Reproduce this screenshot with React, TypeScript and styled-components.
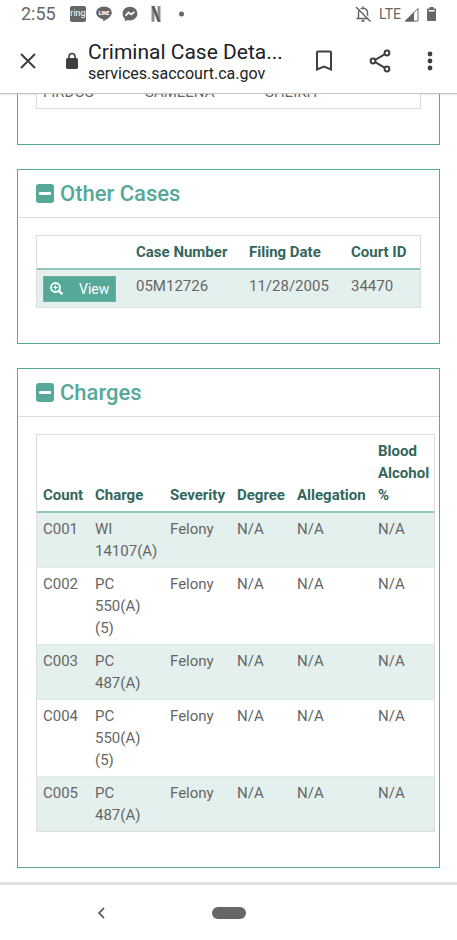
import React from "react";
import styled, { createGlobalStyle } from "styled-components";

const teal = "#56a899";
const line = "#dddddd";

const GlobalStyle = createGlobalStyle`
  * { box-sizing: border-box; }
  body {
    margin: 0;
    background: #ffffff;
    color: #666666;
    font-family: Roboto, "Liberation Sans", sans-serif;
    font-size: 15px;
    line-height: 22px;
  }
`;

const Page = styled.div`
  display: flex;
  flex-direction: column;
  min-height: 100vh;
`;

const StatusBar = styled.div`
  display: flex;
  align-items: center;
  justify-content: space-between;
  height: 28px;
  padding: 0 20px 0 21px;
`;

const StatusGroup = styled.div<{ $gap: number }>`
  display: flex;
  align-items: center;
  gap: ${(p) => p.$gap}px;
`;

const Clock = styled.span`
  width: 39px;
  font-size: 18px;
`;

const Network = styled.span`
  font-size: 14px;
`;

const Toolbar = styled.header`
  display: flex;
  align-items: center;
  height: 66px;
  padding: 0 13px 0 16px;
  border-bottom: 1px solid #c4c4c4;
  box-shadow: 0 1px 1px #eeeeee;
`;

const IconButton = styled.button<{ $width: number }>`
  display: flex;
  align-items: center;
  justify-content: center;
  flex: none;
  width: ${(p) => p.$width}px;
  height: 44px;
  padding: 0;
  border: 0;
  background: none;
  color: #3c4043;
`;

const LockIcon = styled.svg`
  flex: none;
  margin: 0 9px 0 25px;
`;

const Address = styled.div`
  flex: 1;
  min-width: 0;
  padding-top: 3px;
  color: #202124;
`;

const PageTitle = styled.h1`
  margin: 0;
  overflow: hidden;
  font-size: 21px;
  font-weight: 400;
  line-height: 24px;
  text-overflow: ellipsis;
  white-space: nowrap;
`;

const Host = styled.div`
  font-size: 16px;
  line-height: 20px;
`;

const Actions = styled.div`
  display: flex;
  flex: none;
  margin-left: 14px;
`;

const Viewport = styled.main`
  flex: 1;
  overflow: hidden;
  padding: 0 17px 14px;
`;

const Stack = styled.div`
  display: flex;
  flex-direction: column;
  gap: 24px;
  margin-top: -19px;
`;

const Panel = styled.section<{ $continued?: boolean }>`
  border: 1px solid ${teal};
  border-top-width: ${(p) => (p.$continued ? 0 : 1)}px;
`;

const PanelHeading = styled.h2`
  display: flex;
  height: 48px;
  margin: 0;
  border-bottom: 1px solid ${line};
`;

const Toggle = styled.button`
  display: flex;
  align-items: center;
  gap: 6px;
  padding: 0 18px;
  border: 0;
  background: none;
  color: ${teal};
  font: 500 22px/24px Roboto, "Liberation Sans", sans-serif;
`;

const PanelBody = styled.div<{ $continued?: boolean }>`
  padding: ${(p) => (p.$continued ? 0 : 17)}px 18px 35px;
`;

const DataTable = styled.table<{ $min?: number }>`
  width: max(100%, ${(p) => p.$min ?? 0}px);
  table-layout: fixed;
  border: 1px solid ${line};
  border-collapse: separate;
  border-spacing: 0;
`;

const Column = styled.col<{ $width?: number }>`
  width: ${(p) => (p.$width ? `${p.$width}px` : "auto")};
`;

const HeadCell = styled.th`
  padding: 5px 0 5px 6px;
  border-bottom: 2px solid #8fc7bb;
  color: #33675b;
  font-size: 15px;
  font-weight: 700;
  text-align: left;
  vertical-align: bottom;
`;

const Row = styled.tr`
  &:nth-child(odd) { background: #e4f0ed; }
  &:not(:first-child) > td { border-top: 1px solid #e6eae9; }
`;

const PlainRow = styled.tr`
  background: #ffffff;
`;

const Cell = styled.td`
  padding: 5px 6px;
  vertical-align: top;
`;

const ActionCell = styled.td`
  height: 37px;
  padding: 0 6px;
`;

const ViewButton = styled.button`
  display: flex;
  align-items: center;
  gap: 16px;
  height: 26px;
  padding: 0 6px;
  border: 1px solid #6ab3a5;
  background: ${teal};
  color: #ffffff;
  font: 400 14px/20px Roboto, "Liberation Sans", sans-serif;
`;

const SystemNav = styled.nav`
  display: grid;
  grid-template-columns: 1fr 34px 1fr;
  align-items: center;
  height: 58px;
  border-top: 3px solid #e1e1e1;
`;

const NavButton = styled.button`
  display: flex;
  align-items: center;
  justify-content: center;
  height: 32px;
  padding: 0 10px 0 0;
  border: 0;
  background: none;
  color: #666666;
`;

const HomePill = styled.button`
  height: 12px;
  padding: 0;
  border: 0;
  border-radius: 6px;
  background: #666666;
`;

const MinusSquare = () => (
  <svg width="18" height="20" viewBox="0 0 18 20" aria-hidden="true">
    <rect width="18" height="19" rx="3" fill={teal} />
    <rect x="3" y="8" width="12" height="3" rx="1" fill="#fff" />
  </svg>
);

const charges = [
  ["C001", "WI 14107(A)"],
  ["C002", "PC 550(A) (5)"],
  ["C003", "PC 487(A)"],
  ["C004", "PC 550(A) (5)"],
  ["C005", "PC 487(A)"],
];

const chargeColumns = [
  { label: "Count", width: 52 },
  { label: "Charge", width: 75 },
  { label: "Severity", width: 67 },
  { label: "Degree", width: 60 },
  { label: "Allegation", width: 81 },
  { label: "Blood Alcohol %" },
];

const caseColumns = [
  { label: "", width: 93 },
  { label: "Case Number", width: 113 },
  { label: "Filing Date", width: 102 },
  { label: "Court ID" },
];

type ColumnSpec = { label: string; width?: number };

const TableHead = ({ columns }: { columns: ColumnSpec[] }) => (
  <>
    <colgroup>
      {columns.map((c) => <Column key={c.label} $width={c.width} />)}
    </colgroup>
    <thead>
      <tr>
        {columns.map((c) => <HeadCell key={c.label} scope="col">{c.label}</HeadCell>)}
      </tr>
    </thead>
  </>
);

export default function App() {
  return (
    <Page>
      <GlobalStyle />
      <StatusBar>
        <StatusGroup $gap={10}>
          <Clock>2:55</Clock>
          <svg width="16" height="16" viewBox="0 0 16 16">
            <rect width="16" height="16" rx="2" fill="#666" />
            <text x="8" y="10" fill="#fff" fontSize="9" textAnchor="middle" fontFamily="Roboto">ring</text>
          </svg>
          <svg width="16" height="16" viewBox="0 0 16 16">
            <path d="M8 .5C3.6.5.2 3.3.2 6.8c0 3.1 2.8 5.7 6.5 6.2.6.1.5.5.4 1.3-.1.7.1 1 .8.7 2-.9 7.9-4.2 7.9-8.2C15.8 3.3 12.4.5 8 .5Z" fill="#666" />
            <text x="8" y="8.5" fill="#fff" fontSize="5" fontWeight="900" textAnchor="middle" fontFamily="Roboto">LINE</text>
          </svg>
          <svg width="16" height="16" viewBox="0 0 16 16">
            <path d="M8 .8C3.8.8.6 3.8.6 7.700c0 2 .8 3.700 2.200 4.900v2.600l2.500-1.200c.8.3 1.700.4 2.700.4 4.200 0 7.400-3 7.400-6.800S12.200.8 8 .8Z" fill="#666" />
            <path d="m3.500 9.800 3-3.400 2.600 2 3.400-2.500" fill="none" stroke="#fff" strokeWidth="1.7" />
          </svg>
          <svg width="16" height="16" viewBox="0 0 16 16">
            <path d="M3.500 0H6.500V15.500L3.500 16ZM9.500 0h3v16l-3-.5Z" fill="#8d8d8d" />
            <path d="M3.500 0h3l6 16-3-.4Z" fill="#5d5d5d" />
          </svg>
          <svg width="16" height="16" viewBox="0 0 16 16"><circle cx="7.500" cy="8" r="2.500" fill="#666" /></svg>
        </StatusGroup>
        <StatusGroup $gap={7}>
          <svg width="18" height="18" viewBox="0 0 18 18" fill="none" stroke="#666" strokeWidth="1.5">
            <path d="M4.500 13.500V7.800c0-2.500 1.500-4.400 4.500-4.600 3 .2 4.500 2.100 4.500 4.600v5.700M2.500 13.500h13M9 1.500v2" />
            <path d="M7.500 15.800h3" strokeWidth="2" />
            <path d="m3.200 1.200 14 14.500" stroke="#fff" />
            <path d="m2 2 14.500 14.500" />
          </svg>
          <StatusGroup $gap={3}>
            <Network>LTE</Network>
            <svg width="15" height="15" viewBox="0 0 15 15">
              <path d="M14 1.500V14H1.500Z" fill="none" stroke="#666" />
              <path d="M10 5v9.500H.5Z" fill="#666" />
            </svg>
          </StatusGroup>
          <svg width="11" height="16" viewBox="0 0 11 16">
            <path d="M3.500 1h4v1.500H9q1 0 1 1V14q0 1-1 1H2q-1 0-1-1V3.500q0-1 1-1h1.500Z" fill="#666" />
            <path d="M2.500 4h6v1.500h-6Z" fill="#fff" />
          </svg>
        </StatusGroup>
      </StatusBar>

      <Toolbar>
        <IconButton $width={24} aria-label="Close">
          <svg width="18" height="18" viewBox="0 0 18 18" fill="none" stroke="currentColor" strokeWidth="2">
            <path d="m2 2 14 14M16 2 2 16" />
          </svg>
        </IconButton>
        <LockIcon width="14" height="18" viewBox="0 0 14 18">
          <rect x="1" y="6" width="12" height="11" rx="1.500" fill="#3c4043" />
          <path d="M4 7V4.500a3 3 0 0 1 6 0V7" fill="none" stroke="#3c4043" strokeWidth="1.6" />
        </LockIcon>
        <Address>
          <PageTitle>Criminal Case Deta...</PageTitle>
          <Host>services.saccourt.ca.gov</Host>
        </Address>
        <Actions>
          <IconButton $width={40} aria-label="Bookmark">
            <svg width="18" height="22" viewBox="0 0 18 22" fill="none" stroke="currentColor" strokeWidth="2">
              <path d="M2 2.500Q2 1.500 3 1.500H15Q16 1.500 16 2.500V19.500L9 16.500L2 19.500Z" />
            </svg>
          </IconButton>
          <IconButton $width={72} aria-label="Share">
            <svg width="22" height="24" viewBox="0 0 22 24" fill="none" stroke="currentColor" strokeWidth="2">
              <circle cx="4" cy="12" r="2.400" />
              <circle cx="18" cy="4" r="2.400" />
              <circle cx="18" cy="20" r="2.400" />
              <path d="m6.200 10.800 9.700-5.600M6.200 13.200l9.700 5.600" />
            </svg>
          </IconButton>
          <IconButton $width={28} aria-label="More options">
            <svg width="6" height="20" viewBox="0 0 6 20" fill="currentColor">
              <circle cx="3" cy="3" r="2.400" />
              <circle cx="3" cy="10" r="2.400" />
              <circle cx="3" cy="17" r="2.400" />
            </svg>
          </IconButton>
        </Actions>
      </Toolbar>

      <Viewport>
        <Stack>
          <Panel $continued>
            <PanelBody $continued>
              <DataTable>
                <colgroup>
                  <Column $width={102} />
                  <Column $width={120} />
                  <Column />
                </colgroup>
                <tbody>
                  <PlainRow>
                    <Cell>FIRDOS</Cell>
                    <Cell>SAMEENA</Cell>
                    <Cell>SHEIKH</Cell>
                  </PlainRow>
                </tbody>
              </DataTable>
            </PanelBody>
          </Panel>

          <Panel>
            <PanelHeading>
              <Toggle aria-expanded="true"><MinusSquare />Other Cases</Toggle>
            </PanelHeading>
            <PanelBody>
              <DataTable>
                <TableHead columns={caseColumns} />
                <tbody>
                  <Row>
                    <ActionCell>
                      <ViewButton>
                        <svg width="13" height="13" viewBox="0 0 13 13" fill="none" stroke="#fff">
                          <circle cx="5.500" cy="5.500" r="4.500" strokeWidth="1.8" />
                          <path d="m8.700 8.700 3.600 3.600" strokeWidth="2.4" />
                          <path d="M5.500 3v5M3 5.500h5" strokeWidth="1.2" />
                        </svg>
                        View
                      </ViewButton>
                    </ActionCell>
                    <Cell>05M12726</Cell>
                    <Cell>11/28/2005</Cell>
                    <Cell>34470</Cell>
                  </Row>
                </tbody>
              </DataTable>
            </PanelBody>
          </Panel>

          <Panel>
            <PanelHeading>
              <Toggle aria-expanded="true"><MinusSquare />Charges</Toggle>
            </PanelHeading>
            <PanelBody>
              <DataTable $min={399}>
                <TableHead columns={chargeColumns} />
                <tbody>
                  {charges.map(([count, charge]) => (
                    <Row key={count}>
                      <Cell>{count}</Cell>
                      <Cell>{charge}</Cell>
                      <Cell>Felony</Cell>
                      <Cell>N/A</Cell>
                      <Cell>N/A</Cell>
                      <Cell>N/A</Cell>
                    </Row>
                  ))}
                </tbody>
              </DataTable>
            </PanelBody>
          </Panel>
        </Stack>
      </Viewport>

      <SystemNav aria-label="System">
        <NavButton aria-label="Back">
          <svg width="8" height="12" viewBox="0 0 8 12" fill="none" stroke="currentColor" strokeWidth="1.8">
            <path d="M7 1 2 6l5 5" />
          </svg>
        </NavButton>
        <HomePill aria-label="Home" />
      </SystemNav>
    </Page>
  );
}
